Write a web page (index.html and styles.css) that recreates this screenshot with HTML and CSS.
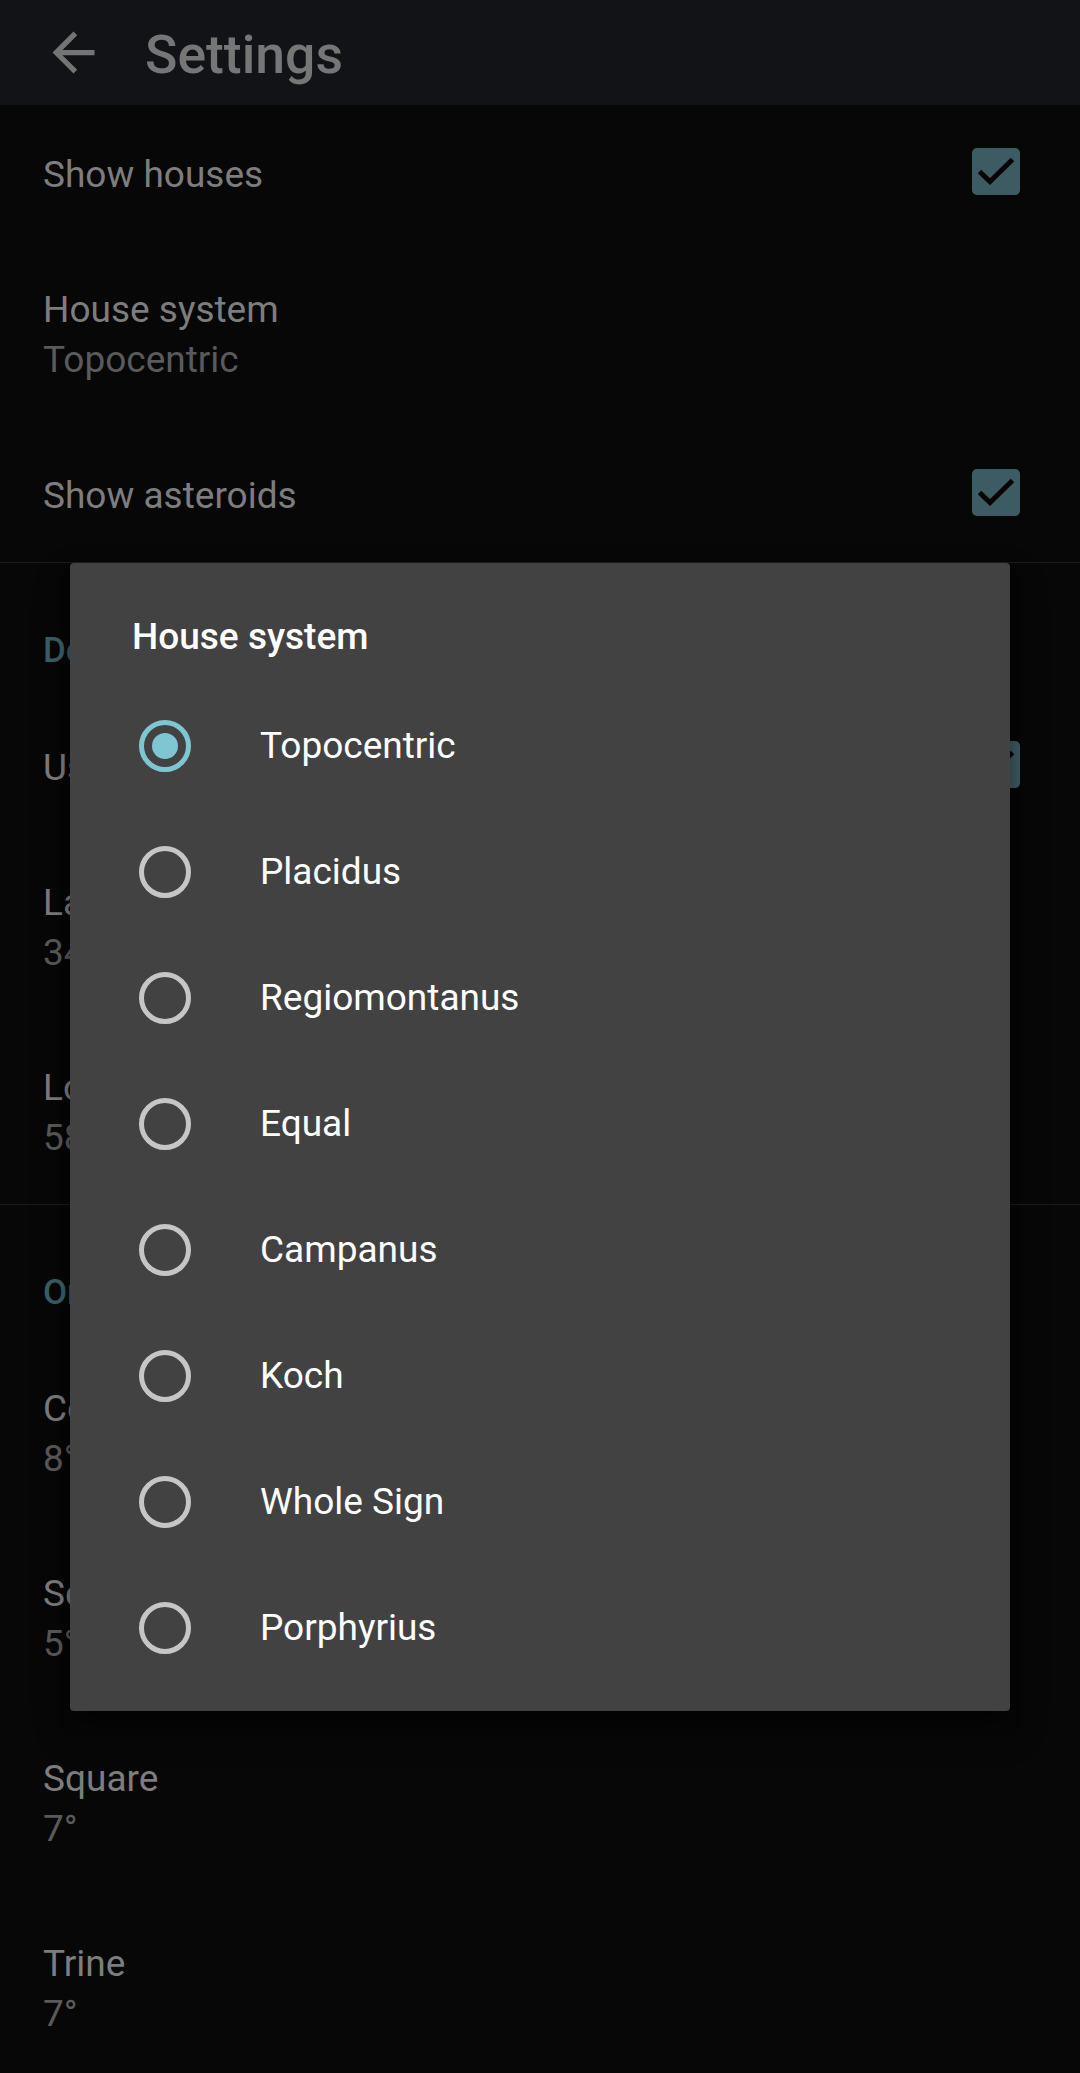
FILE: index.html
```html
<!DOCTYPE html>
<html lang="en">
<head>
<meta charset="utf-8">
<title>Settings</title>
<link rel="stylesheet" href="styles.css">
</head>
<body>
<div class="screen">
  <header class="appbar">
    <svg class="back" viewBox="0 0 24 24" width="63" height="63"><path d="M20 11H7.830l5.590-5.590L12 4l-8 8 8 8 1.410-1.410L7.830 13H20v-2z" fill="#747474"/></svg>
    <h1 class="title">Settings</h1>
  </header>

  <div class="prefs">
    <div class="pref single">
      <span class="pt">Show houses</span>
      <span class="cb"><svg viewBox="0 0 48 47" width="48" height="47"><polyline points="7.5,23.5 18,33.5 40.5,11.5" fill="none" stroke="#050505" stroke-width="5"/></svg></span>
    </div>
    <div class="pref double">
      <div class="txt"><span class="pt">House system</span><span class="ps">Topocentric</span></div>
    </div>
    <div class="pref single">
      <span class="pt">Show asteroids</span>
      <span class="cb"><svg viewBox="0 0 48 47" width="48" height="47"><polyline points="7.5,23.5 18,33.5 40.5,11.5" fill="none" stroke="#050505" stroke-width="5"/></svg></span>
    </div>
    <div class="divider"></div>
    <div class="cat">Default location</div>
    <div class="pref single">
      <span class="pt">Use current location</span>
      <span class="cb"><svg viewBox="0 0 48 47" width="48" height="47"><polyline points="7.5,23.5 18,33.5 40.5,11.5" fill="none" stroke="#050505" stroke-width="5"/></svg></span>
    </div>
    <div class="pref double">
      <div class="txt"><span class="pt">Latitude</span><span class="ps">34.6401</span></div>
    </div>
    <div class="pref double">
      <div class="txt"><span class="pt">Longitude</span><span class="ps">58.7862</span></div>
    </div>
    <div class="divider"></div>
    <div class="cat">Orbs</div>
    <div class="pref double">
      <div class="txt"><span class="pt">Conjunction</span><span class="ps">8°</span></div>
    </div>
    <div class="pref double">
      <div class="txt"><span class="pt">Sextile</span><span class="ps">5°</span></div>
    </div>
    <div class="pref double">
      <div class="txt"><span class="pt">Square</span><span class="ps">7°</span></div>
    </div>
    <div class="pref double">
      <div class="txt"><span class="pt">Trine</span><span class="ps">7°</span></div>
    </div>
    <div class="pref double">
      <div class="txt"><span class="pt">Opposition</span><span class="ps">8°</span></div>
    </div>
  </div>

  <div class="dialog">
    <h2 class="dtitle">House system</h2>
    <ul class="options">
      <li class="opt"><span class="radio on"></span><span class="olabel">Topocentric</span></li>
      <li class="opt"><span class="radio"></span><span class="olabel">Placidus</span></li>
      <li class="opt"><span class="radio"></span><span class="olabel">Regiomontanus</span></li>
      <li class="opt"><span class="radio"></span><span class="olabel">Equal</span></li>
      <li class="opt"><span class="radio"></span><span class="olabel">Campanus</span></li>
      <li class="opt"><span class="radio"></span><span class="olabel">Koch</span></li>
      <li class="opt"><span class="radio"></span><span class="olabel">Whole Sign</span></li>
      <li class="opt"><span class="radio"></span><span class="olabel">Porphyrius</span></li>
    </ul>
  </div>
</div>
</body>
</html>
```

FILE: styles.css
```css
html, body {
  margin: 0;
  padding: 0;
  background: #070707;
}

.screen {
  position: relative;
  width: 1080px;
  height: 2073px;
  overflow: hidden;
  background: #070707;
  font-family: "Roboto", "Noto Sans", sans-serif;
}

.appbar {
  height: 105px;
  box-sizing: border-box;
  padding-top: 4px;
  background: #121316;
  display: flex;
  align-items: center;
}

.back {
  display: block;
  margin-left: 42px;
  margin-top: -4px;
  flex: none;
}

.title {
  margin: 0 0 0 40px;
  font-size: 53.5px;
  font-weight: 500;
  color: #767676;
  line-height: 61px;
}

.prefs {
  display: flex;
  flex-direction: column;
}

.pref {
  display: flex;
  align-items: center;
  justify-content: space-between;
  box-sizing: border-box;
  padding: 3px 60px 0 43px;
  flex: none;
}

.pref.single {
  height: 136px;
}

.pref.double {
  height: 185px;
}

.txt {
  display: flex;
  flex-direction: column;
}

.pt, .ps {
  font-size: 37px;
  line-height: 50px;
  white-space: nowrap;
}

.pt {
  color: #7d7d7d;
}

.ps {
  color: #5a5a5a;
}

.cb {
  width: 48px;
  height: 47px;
  border-radius: 5px;
  background: #3d5b62;
  margin-bottom: 6px;
  flex: none;
}

.cb svg {
  display: block;
}

.divider {
  height: 1px;
  background: #1b1c1d;
  flex: none;
}

.cat {
  height: 135px;
  box-sizing: border-box;
  padding: 66px 0 0 43px;
  font-size: 35px;
  line-height: 44px;
  font-weight: 500;
  color: #3c5e66;
  flex: none;
}

.dialog {
  position: absolute;
  left: 70px;
  top: 563px;
  width: 940px;
  box-sizing: border-box;
  padding: 52px 0 20px 0;
  background: #424242;
  border-radius: 4px;
  box-shadow: 0 19px 38px rgba(0, 0, 0, 0.30), 0 15px 12px rgba(0, 0, 0, 0.22);
}

.dtitle {
  margin: 0 0 24px 62px;
  font-size: 37px;
  font-weight: 500;
  line-height: 44px;
  color: #ffffff;
}

.options {
  list-style: none;
  margin: 0;
  padding: 0;
}

.opt {
  height: 126px;
  display: flex;
  align-items: center;
  padding-left: 69px;
}

.radio {
  width: 52px;
  height: 52px;
  box-sizing: border-box;
  border: 5px solid #c6c6c6;
  border-radius: 50%;
  display: flex;
  align-items: center;
  justify-content: center;
  flex: none;
}

.radio.on {
  border-color: #80c5d2;
}

.radio.on::after {
  content: "";
  width: 26px;
  height: 26px;
  border-radius: 50%;
  background: #80c5d2;
}

.olabel {
  margin-left: 69px;
  font-size: 37px;
  line-height: 50px;
  color: #ffffff;
}
```
